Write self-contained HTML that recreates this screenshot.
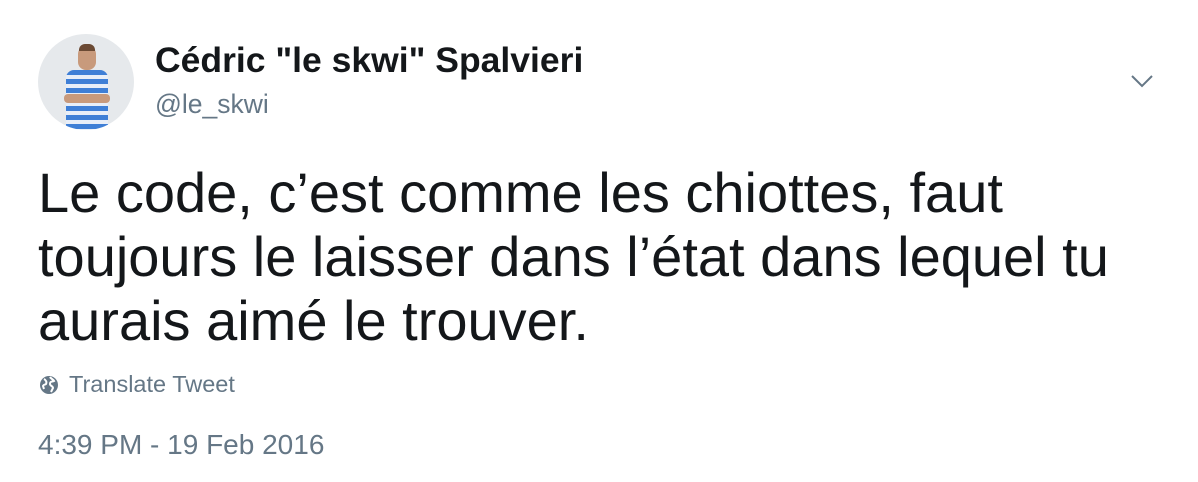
<!DOCTYPE html>
<html><head><style>
body{margin:0;width:1198px;height:482px;background:#fff;font-family:"Liberation Sans",sans-serif;position:relative;overflow:hidden}
.a{position:absolute;white-space:nowrap}
</style></head><body>
<div class="a" style="left:38px;top:34px;width:96px;height:96px;border-radius:50%;background:#e6e9ec;overflow:hidden">
<div style="position:absolute;left:40px;top:12px;width:18px;height:24px;border-radius:8px;background:#c89a7c"></div>
<div style="position:absolute;left:41px;top:10px;width:16px;height:7px;border-radius:6px 6px 0 0;background:#6b4a34"></div>
<div style="position:absolute;left:28px;top:36px;width:42px;height:62px;border-radius:8px 8px 0 0;background:repeating-linear-gradient(#3f7fd6 0 5px,#e8eef8 5px 9px)"></div>
<div style="position:absolute;left:26px;top:60px;width:46px;height:9px;border-radius:4px;background:#c89a7c"></div>
</div>
<div class="a" style="left:155px;top:40px;font-size:35.5px;font-weight:bold;color:#14171a">Cédric "le skwi" Spalvieri</div>
<div class="a" style="left:155px;top:89px;font-size:26.5px;color:#657786">@le_skwi</div>
<svg class="a" style="left:1130px;top:73px" width="24" height="16" viewBox="0 0 24 16"><path d="M2 3l10 10 10-10" fill="none" stroke="#657786" stroke-width="2"/></svg>
<div class="a" style="left:38px;top:161px;font-size:56px;line-height:64px;color:#14171a">Le code, c’est comme les chiottes, faut<br>toujours le laisser dans l’état dans lequel tu<br>aurais aimé le trouver.</div>
<svg class="a" style="left:39px;top:375px" width="20" height="20" viewBox="0 0 20 20"><circle cx="10" cy="10" r="9" fill="#657786"/><path d="M5 4c2 1 3 3 2 5-1 1-2 0-3 2l1 3M11 2c1 2 3 2 4 4-2 1-4 0-4 3 0 2 3 2 3 4l-2 4" fill="none" stroke="#fff" stroke-width="2"/></svg>
<div class="a" style="left:69px;top:371px;font-size:23.5px;color:#657786">Translate Tweet</div>
<div class="a" style="left:38px;top:429px;font-size:28px;color:#657786">4:39 PM - 19 Feb 2016</div>
</body></html>
